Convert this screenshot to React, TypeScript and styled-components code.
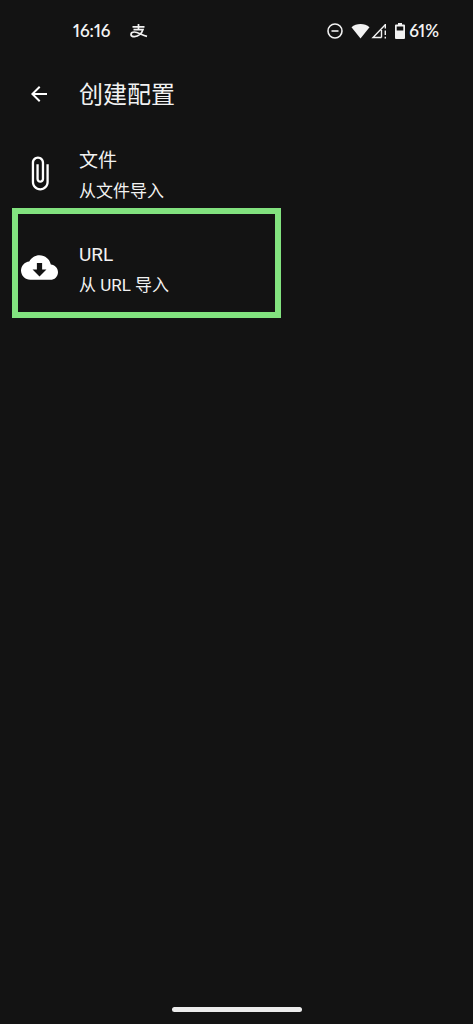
import React from "react";
import styled, { createGlobalStyle } from "styled-components";

const GlobalStyle = createGlobalStyle`
  * { box-sizing: border-box; }
  body {
    margin: 0;
    background: #131313;
    color: #f2f2f2;
    font-family: Roboto, "Noto Sans CJK SC", sans-serif;
  }
`;

const Screen = styled.div`
  display: flex;
  flex-direction: column;
  min-height: 100vh;
`;

const StatusBar = styled.header`
  display: flex;
  justify-content: space-between;
  align-items: center;
  height: 62px;
  padding: 0 34px 0 73px;
  font: 600 17px/20px Lato, sans-serif;
  font-variant-numeric: proportional-nums;
`;

const StatusGroup = styled.div<{ $gap: number }>`
  display: flex;
  align-items: center;
  gap: ${(p) => p.$gap}px;
`;

const AppBar = styled.div`
  display: flex;
  align-items: center;
  height: 64px;
  padding: 0 20px;
`;

const IconSlot = styled.span`
  display: flex;
  justify-content: center;
  flex: none;
  width: 38px;
  margin-right: 21px;
  color: #fff;
`;

const BackButton = styled.button`
  display: flex;
  padding: 0;
  border: 0;
  background: none;
  color: inherit;
  cursor: pointer;
`;

const Title = styled.h1`
  margin: 0;
  padding-top: 2px;
  font-size: 24px;
  font-weight: 400;
  line-height: 32px;
`;

const SourceList = styled.main`
  flex: 1;
`;

const SourceItem = styled.div`
  position: relative;
`;

const SourceButton = styled.button`
  display: flex;
  align-items: center;
  width: 100%;
  height: 94px;
  padding: 0 20px;
  border: 0;
  background: none;
  color: inherit;
  font-family: inherit;
  text-align: left;
  cursor: pointer;
`;

const SourceText = styled.span`
  display: flex;
  flex-direction: column;
  gap: 2px;
  padding-top: 5px;
`;

const SourceName = styled.span`
  font-size: 19px;
  line-height: 28px;
`;

const SourceSummary = styled.span`
  font-size: 17px;
  line-height: 28px;
`;

const Highlight = styled.span`
  position: absolute;
  top: -12px;
  bottom: -4px;
  left: 12px;
  width: 269px;
  border: 6px solid #82e27f;
  pointer-events: none;
`;

const NavBar = styled.footer`
  display: flex;
  justify-content: center;
  padding: 12px 0;
`;

const NavHandle = styled.span`
  width: 130px;
  height: 5px;
  border-radius: 3px;
  background: #ececec;
`;

const PayIcon = () => (
  <svg width="18" height="14" viewBox="0 0 18 14" fill="none" stroke="currentColor" strokeWidth="1.7">
    <path d="M2.500 2.800h12M8.500 0v5.400M3.500 5.600h9.500C12 9 8.500 12.700 4.500 12.700 2 12.700 1 11.600 1 10.400 1 9 2.300 8 4.300 8c3.500 0 7 2.800 12.700 4.400" />
  </svg>
);

const DoNotDisturbIcon = () => (
  <svg width="16" height="16" viewBox="0 0 16 16" fill="none" stroke="currentColor" strokeWidth="1.600">
    <circle cx="8" cy="8" r="7" />
    <path d="M4.500 8h7" />
  </svg>
);

const SignalIcons = () => (
  <svg width="36" height="16" viewBox="0 0 36 16" fill="none" stroke="currentColor" strokeWidth="1.400">
    <path fill="currentColor" stroke="none" d="M9.500 15.500 .5 4.300C3 2.100 6 1 9.500 1s6.500 1.100 9 3.300z" />
    <path d="M30.500 14.500H22L34 2M30.500 7v7.500" />
    <path d="M34.300 1v4.500M34.300 7.500v4.500M34.300 13.700v1.800" />
  </svg>
);

const BatteryIcon = () => (
  <svg width="10" height="16" viewBox="0 0 10 16" fill="currentColor">
    <path fillRule="evenodd" d="M3 0h4v1.500h2a1 1 0 0 1 1 1V15a1 1 0 0 1-1 1H1a1 1 0 0 1-1-1V2.500a1 1 0 0 1 1-1h2zM1.700 3.500v4h6.600v-4z" />
  </svg>
);

const MaterialIcon = ({ size, d }: { size: number; d: string }) => (
  <svg width={size} height={size} viewBox="0 0 24 24" fill="currentColor" aria-hidden="true">
    <path d={d} />
  </svg>
);

const BACK = "M20 11H7.830l5.590-5.590L12 4l-8 8 8 8 1.410-1.410L7.830 13H20v-2z";
const CLIP =
  "M16.5 6v11.500c0 2.210-1.790 4-4 4s-4-1.790-4-4V5c0-1.380 1.120-2.500 2.500-2.500s2.500 1.120 2.500 2.500v10.500c0 .55-.45 1-1 1s-1-.45-1-1V6H10v9.500c0 1.380 1.120 2.500 2.500 2.500s2.500-1.120 2.500-2.500V5c0-2.210-1.790-4-4-4S7 2.790 7 5v12.500c0 3.040 2.460 5.500 5.500 5.500s5.500-2.460 5.500-5.500V6h-1.500z";
const CLOUD =
  "M19.350 10.040C18.670 6.590 15.640 4 12 4 9.110 4 6.600 5.640 5.350 8.040 2.340 8.360 0 10.910 0 14c0 3.310 2.690 6 6 6h13c2.760 0 5-2.240 5-5 0-2.640-2.050-4.780-4.650-4.960zM16.500 13.300 12 17.800l-4.500-4.500h2.800V9h3.400v4.300h2.800z";

const sources = [
  { name: "文件", summary: "从文件导入", icon: CLIP, highlighted: false },
  { name: "URL", summary: "从 URL 导入", icon: CLOUD, highlighted: true },
];

export default function App() {
  return (
    <Screen lang="zh-CN">
      <GlobalStyle />
      <StatusBar>
        <StatusGroup $gap={20}>
          <span>16:16</span>
          <PayIcon />
        </StatusGroup>
        <StatusGroup $gap={8}>
          <DoNotDisturbIcon />
          <SignalIcons />
          <StatusGroup $gap={4}>
            <BatteryIcon />
            <span>61%</span>
          </StatusGroup>
        </StatusGroup>
      </StatusBar>
      <AppBar>
        <IconSlot>
          <BackButton aria-label="返回">
            <MaterialIcon size={24} d={BACK} />
          </BackButton>
        </IconSlot>
        <Title>创建配置</Title>
      </AppBar>
      <SourceList>
        {sources.map((s) => (
          <SourceItem key={s.name}>
            <SourceButton>
              <IconSlot>
                <MaterialIcon size={37} d={s.icon} />
              </IconSlot>
              <SourceText>
                <SourceName>{s.name}</SourceName>
                <SourceSummary>{s.summary}</SourceSummary>
              </SourceText>
            </SourceButton>
            {s.highlighted && <Highlight />}
          </SourceItem>
        ))}
      </SourceList>
      <NavBar>
        <NavHandle />
      </NavBar>
    </Screen>
  );
}
